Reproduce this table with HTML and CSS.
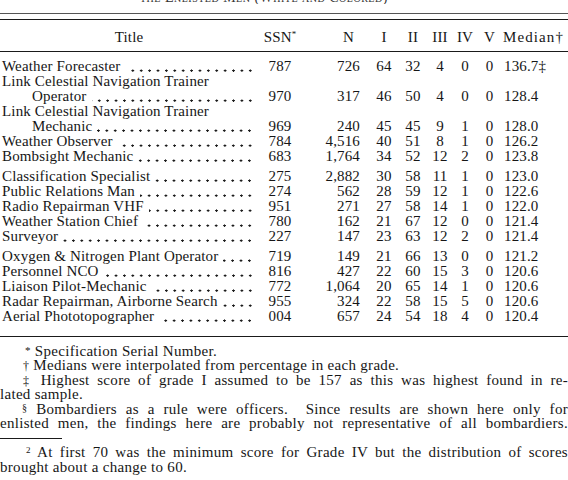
FILE: index.html
```html
<!DOCTYPE html>
<html>
<head>
<meta charset="utf-8">
<link rel="stylesheet" href="styles.css">
</head>
<body>
<div class="page">
  <div class="running-head"><span>the Enlisted Men (White and Colored)</span></div>
  <div class="rule-double"></div>
  <table class="data">
    <colgroup>
      <col class="c-title"><col class="c-ssn"><col class="c-n"><col class="c-i"><col class="c-ii"><col class="c-iii"><col class="c-iv"><col class="c-v"><col class="c-med">
    </colgroup>
    <thead>
      <tr>
        <th class="h-title">Title</th>
        <th class="h-ssn">SSN<sup>*</sup></th>
        <th class="h-n">N</th>
        <th>I</th>
        <th>II</th>
        <th>III</th>
        <th>IV</th>
        <th>V</th>
        <th class="h-med">Median†</th>
      </tr>
    </thead>
    <tbody>
      <tr class="first">
        <td class="t"><div class="entry"><span class="lbl">Weather Forecaster</span><span class="dots"></span></div></td>
        <td>787</td><td class="n">726</td><td>64</td><td>32</td><td>4</td><td>0</td><td>0</td><td class="m">136.7‡</td>
      </tr>
      <tr>
        <td class="t"><div>Link Celestial Navigation Trainer</div><div class="entry sub"><span class="lbl">Operator</span><span class="dots"></span></div></td>
        <td>970</td><td class="n">317</td><td>46</td><td>50</td><td>4</td><td>0</td><td>0</td><td class="m">128.4</td>
      </tr>
      <tr>
        <td class="t"><div>Link Celestial Navigation Trainer</div><div class="entry sub"><span class="lbl">Mechanic</span><span class="dots"></span></div></td>
        <td>969</td><td class="n">240</td><td>45</td><td>45</td><td>9</td><td>1</td><td>0</td><td class="m">128.0</td>
      </tr>
      <tr>
        <td class="t"><div class="entry"><span class="lbl">Weather Observer</span><span class="dots"></span></div></td>
        <td>784</td><td class="n">4,516</td><td>40</td><td>51</td><td>8</td><td>1</td><td>0</td><td class="m">126.2</td>
      </tr>
      <tr>
        <td class="t"><div class="entry"><span class="lbl">Bombsight Mechanic</span><span class="dots"></span></div></td>
        <td>683</td><td class="n">1,764</td><td>34</td><td>52</td><td>12</td><td>2</td><td>0</td><td class="m">123.8</td>
      </tr>
      <tr class="gap">
        <td class="t"><div class="entry"><span class="lbl">Classification Specialist</span><span class="dots"></span></div></td>
        <td>275</td><td class="n">2,882</td><td>30</td><td>58</td><td>11</td><td>1</td><td>0</td><td class="m">123.0</td>
      </tr>
      <tr>
        <td class="t"><div class="entry"><span class="lbl">Public Relations Man</span><span class="dots"></span></div></td>
        <td>274</td><td class="n">562</td><td>28</td><td>59</td><td>12</td><td>1</td><td>0</td><td class="m">122.6</td>
      </tr>
      <tr>
        <td class="t"><div class="entry"><span class="lbl">Radio Repairman VHF</span><span class="dots"></span></div></td>
        <td>951</td><td class="n">271</td><td>27</td><td>58</td><td>14</td><td>1</td><td>0</td><td class="m">122.0</td>
      </tr>
      <tr>
        <td class="t"><div class="entry"><span class="lbl">Weather Station Chief</span><span class="dots"></span></div></td>
        <td>780</td><td class="n">162</td><td>21</td><td>67</td><td>12</td><td>0</td><td>0</td><td class="m">121.4</td>
      </tr>
      <tr>
        <td class="t"><div class="entry"><span class="lbl">Surveyor</span><span class="dots"></span></div></td>
        <td>227</td><td class="n">147</td><td>23</td><td>63</td><td>12</td><td>2</td><td>0</td><td class="m">121.4</td>
      </tr>
      <tr class="gap">
        <td class="t"><div class="entry"><span class="lbl">Oxygen &amp; Nitrogen Plant Operator</span><span class="dots"></span></div></td>
        <td>719</td><td class="n">149</td><td>21</td><td>66</td><td>13</td><td>0</td><td>0</td><td class="m">121.2</td>
      </tr>
      <tr>
        <td class="t"><div class="entry"><span class="lbl">Personnel NCO</span><span class="dots"></span></div></td>
        <td>816</td><td class="n">427</td><td>22</td><td>60</td><td>15</td><td>3</td><td>0</td><td class="m">120.6</td>
      </tr>
      <tr>
        <td class="t"><div class="entry"><span class="lbl">Liaison Pilot-Mechanic</span><span class="dots"></span></div></td>
        <td>772</td><td class="n">1,064</td><td>20</td><td>65</td><td>14</td><td>1</td><td>0</td><td class="m">120.6</td>
      </tr>
      <tr>
        <td class="t"><div class="entry"><span class="lbl">Radar Repairman, Airborne Search</span><span class="dots"></span></div></td>
        <td>955</td><td class="n">324</td><td>22</td><td>58</td><td>15</td><td>5</td><td>0</td><td class="m">120.6</td>
      </tr>
      <tr class="last">
        <td class="t"><div class="entry"><span class="lbl">Aerial Phototopographer</span><span class="dots"></span></div></td>
        <td>004</td><td class="n">657</td><td>24</td><td>54</td><td>18</td><td>4</td><td>0</td><td class="m">120.4</td>
      </tr>
    </tbody>
  </table>
  <div class="notes">
    <p class="line ind1"><span class="mk">*</span> Specification Serial Number.</p>
    <p class="line ind2"><span class="mk2">†</span> Medians were interpolated from percentage in each grade.</p>
    <p class="line ind2 full"><span class="mk2">‡</span> Highest score of grade I assumed to be 157 as this was highest found in re-</p>
    <p class="line">lated sample.</p>
    <p class="line ind3 full"><span class="mk3">§</span> Bombardiers as a rule were officers. &nbsp;Since results are shown here only for</p>
    <p class="line full">enlisted men, the findings here are probably not representative of all bombardiers.</p>
    <div class="short-rule"></div>
    <p class="line ind4 full"><sup class="fn">2</sup> At first 70 was the minimum score for Grade IV but the distribution of scores</p>
    <p class="line">brought about a change to 60.</p>
  </div>
</div>
</body>
</html>
```
FILE: styles.css
```css
html, body {
  margin: 0;
  padding: 0;
  background: #ffffff;
}

body {
  color: #161616;
  font-family: "Liberation Serif", "Times New Roman", serif;
}

.page {
  width: 568px;
  height: 480px;
  overflow: hidden;
}

.running-head {
  height: 4px;
  overflow: hidden;
  padding-left: 140px;
  font-size: 14px;
  font-variant: small-caps;
  letter-spacing: 0.5px;
  color: #333;
}

.running-head span {
  display: block;
  line-height: 14px;
  margin-top: -9px;
}

.rule-double {
  margin-top: 9px;
  height: 5px;
  border-top: 1px solid #555;
  border-bottom: 1px solid #1a1a1a;
}

.data {
  border-collapse: collapse;
  table-layout: fixed;
  width: 568px;
  font-size: 15px;
  letter-spacing: 0.15px;
}

.c-title { width: 258px; }
.c-ssn { width: 44px; }
.c-n { width: 66px; }
.c-i { width: 32px; }
.c-ii { width: 26px; }
.c-iii { width: 28px; }
.c-iv { width: 22px; }
.c-v { width: 27px; }
.c-med { width: 65px; }

.data th {
  font-weight: normal;
  height: 28px;
  padding: 3px 0 0 0;
  text-align: center;
  vertical-align: middle;
  border-bottom: 1.5px solid #1a1a1a;
  white-space: nowrap;
}

.data th.h-n {
  text-align: right;
  padding-right: 14px;
}

.data th.h-med {
  text-align: left;
  padding-left: 0;
  letter-spacing: 1.1px;
}

.data sup {
  font-size: 9px;
  vertical-align: 5px;
  line-height: 0;
}

.data td {
  padding: 0;
  line-height: 15px;
  text-align: center;
  vertical-align: bottom;
  white-space: nowrap;
}

.data td.t {
  text-align: left;
  padding-left: 2px;
  padding-right: 4px;
}

.data td.n {
  text-align: right;
  padding-right: 8px;
}

.data td.m {
  text-align: left;
  padding-left: 1px;
}

.data tr.first td {
  padding-top: 7px;
}

.data tr.gap td {
  padding-top: 5px;
}

.data tr.last td {
  padding-bottom: 12px;
  border-bottom: 1px solid #1a1a1a;
}

.entry {
  display: flex;
  height: 15px;
}

.entry.sub {
  padding-left: 30px;
}

.lbl {
  white-space: nowrap;
  padding-right: 5px;
}

.dots {
  flex: 1;
  background-image: radial-gradient(circle at 4.2px 11.6px, #1c1c1c 0.95px, rgba(255,255,255,0) 1.35px);
  background-size: 8.4px 15px;
  background-repeat: repeat-x;
  background-position: right top;
}

.notes {
  margin-top: 7px;
  font-size: 15px;
  letter-spacing: 0.3px;
}

.line {
  margin: 0;
  line-height: 14.4px;
  white-space: nowrap;
}

.line.full {
  white-space: normal;
  text-align: justify;
  text-align-last: justify;
}

.ind1 { padding-left: 25px; }
.ind2 { padding-left: 23px; }
.ind3 { padding-left: 22px; }
.ind4 { padding-left: 26px; }

.mk {
  font-size: 11px;
  vertical-align: 2px;
  line-height: 0;
}

.mk2 {
  font-size: 12px;
  line-height: 0;
}

.mk3 {
  font-size: 10px;
  vertical-align: 3px;
  line-height: 0;
}

.short-rule {
  width: 62px;
  margin: 8px 0 6px 0;
  border-top: 1px solid #1a1a1a;
}

.fn {
  font-size: 9px;
  vertical-align: 4px;
  line-height: 0;
}
```
